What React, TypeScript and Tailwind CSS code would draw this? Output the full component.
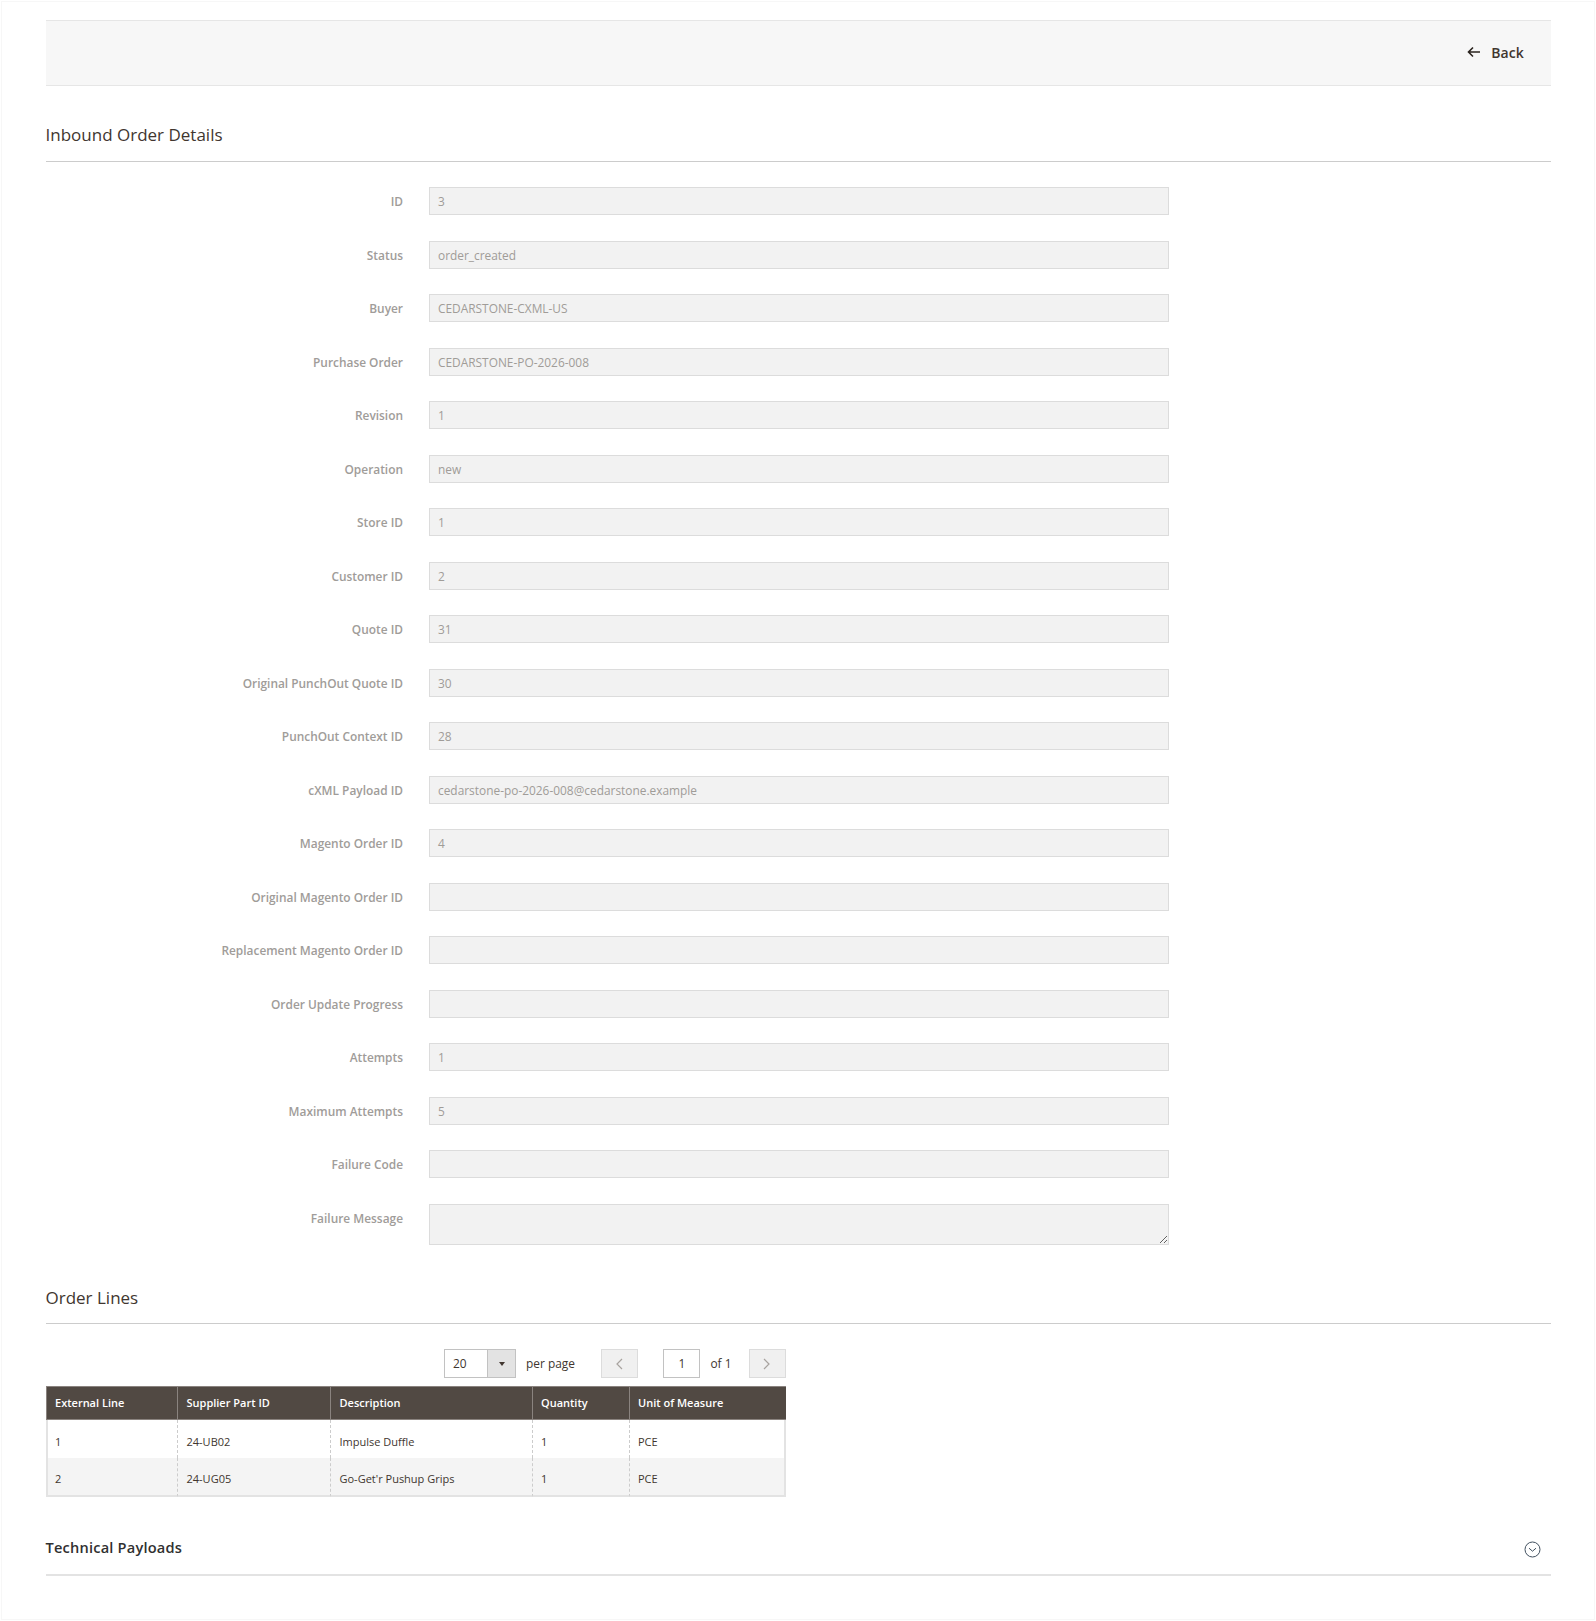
import React from "react";

const fields: [string, string][] = [
  ["ID", "3"],
  ["Status", "order_created"],
  ["Buyer", "CEDARSTONE-CXML-US"],
  ["Purchase Order", "CEDARSTONE-PO-2026-008"],
  ["Revision", "1"],
  ["Operation", "new"],
  ["Store ID", "1"],
  ["Customer ID", "2"],
  ["Quote ID", "31"],
  ["Original PunchOut Quote ID", "30"],
  ["PunchOut Context ID", "28"],
  ["cXML Payload ID", "cedarstone-po-2026-008@cedarstone.example"],
  ["Magento Order ID", "4"],
  ["Original Magento Order ID", ""],
  ["Replacement Magento Order ID", ""],
  ["Order Update Progress", ""],
  ["Attempts", "1"],
  ["Maximum Attempts", "5"],
  ["Failure Code", ""],
];

const headers = [
  ["External Line", "w-[131.5px]"],
  ["Supplier Part ID", "w-[153px]"],
  ["Description", "w-[201.5px]"],
  ["Quantity", "w-[97px]"],
  ["Unit of Measure", ""],
];

const rows = [
  ["1", "24-UB02", "Impulse Duffle", "1", "PCE"],
  ["2", "24-UG05", "Go-Get'r Pushup Grips", "1", "PCE"],
];

function Field({ label, value }: { label: string; value: string }) {
  return (
    <div className="flex h-[53.5px] items-start">
      <label className="w-[357.5px] h-[28px] leading-[28px] text-right text-[11.9px] font-semibold text-[#a09c99]">
        {label}
      </label>
      <div className="ml-[26px] h-[28px] w-[740px] border border-[#dcdcdc] bg-[#f2f2f2] px-[8px] text-[11.9px] leading-[26px] text-[#a09c98]">
        {value}
      </div>
    </div>
  );
}

export default function App() {
  return (
    <div
      className="h-[1621px] w-[1596px] bg-white p-[1px] text-[#41362f]"
      style={{ fontFamily: '"Open Sans", "Noto Sans", sans-serif' }}
    >
      <div className="h-[1619px] w-[1594px] border border-[#f7f7f7] pl-[43.5px] pr-[44px] pt-[18px]">
        <div className="flex h-[66px] w-[1505.5px] items-center justify-end border-y border-[#e6e6e6] bg-[#f7f7f7] pb-[2px] pr-[27px]">
          <svg width="14" height="12" viewBox="0 0 14 12" fill="none" stroke="#2b241f" strokeWidth="1.6" className="mr-[10px]">
            <path d="M13 6H1.5M6 1.5 1.5 6 6 10.5" />
          </svg>
          <span className="text-[14px] font-semibold tracking-[0.1px] text-[#41362f]">Back</span>
        </div>

        <div className="mt-[36px] h-[40px] w-[1505.5px] border-b border-[#cccccc] text-[17px] leading-[26px]">
          Inbound Order Details
        </div>

        <div className="mt-[25px] w-[1505.5px]">
          {fields.map(([l, v]) => (
            <Field key={l} label={l} value={v} />
          ))}
          <div className="flex items-start">
            <label className="w-[357.5px] h-[28px] leading-[28px] text-right text-[11.9px] font-semibold text-[#a09c99]">
              Failure Message
            </label>
            <textarea
              disabled
              className="ml-[26px] block h-[41px] w-[740px] border border-[#dcdcdc] bg-[#f2f2f2] resize-y"
            />
          </div>
        </div>

        <div className="mt-[39px] h-[40px] w-[1505.5px] border-b border-[#cccccc] text-[17px] leading-[28px]">
          Order Lines
        </div>

        <div className="mt-[25px] flex h-[30px] w-[740px] items-center text-[11.9px] leading-[29px]">
          <div className="ml-[398.5px] flex h-[29px] w-[72px] border border-[#c2c2c2] bg-white">
            <span className="flex-1 pl-[8px] leading-[27px]">20</span>
            <span className="flex w-[28px] items-center justify-center border-l border-[#c2c2c2] bg-[#e3e3e3]">
              <span className="h-0 w-0 border-x-[3.5px] border-t-[4px] border-x-transparent border-t-[#41362f]" />
            </span>
          </div>
          <span className="ml-[10px]">per page</span>
          <span className="ml-[26px] flex h-[29px] w-[37px] items-center justify-center border border-[#dcdcdc] bg-[#f0f0f0]">
            <svg width="8" height="12" viewBox="0 0 8 12" fill="none" stroke="#a8a39f" strokeWidth="1.2">
              <path d="M7 1 2 6l5 5" />
            </svg>
          </span>
          <span className="ml-[25.5px] flex h-[29px] w-[37px] items-center justify-center border border-[#c2c2c2] bg-white">1</span>
          <span className="ml-[10px]">of 1</span>
          <span className="ml-auto flex h-[29px] w-[37px] items-center justify-center border border-[#dcdcdc] bg-[#f0f0f0]">
            <svg width="8" height="12" viewBox="0 0 8 12" fill="none" stroke="#a8a39f" strokeWidth="1.2">
              <path d="m1 1 5 5-5 5" />
            </svg>
          </span>
        </div>

        <table className="mt-[7px] w-[740px] table-fixed border-separate border-spacing-0 text-[11px]">
          <thead>
            <tr className="h-[34px] bg-[#514943] text-white">
              {headers.map(([h, w]) => (
                <th
                  key={h}
                  className={`${w} border-y border-y-[#8a837f] border-l border-l-[#8a837f] pl-[8.5px] pr-[8px] pt-[1px] text-left font-semibold`}
                >
                  {h}
                </th>
              ))}
            </tr>
          </thead>
          <tbody>
            {rows.map((r, ri) => (
              <tr key={ri} className={ri === 1 ? "h-[39px] bg-[#f4f4f4]" : "h-[38px] bg-white"}>
                {r.map((c, i) => (
                  <td
                    key={i}
                    className={`${i === 0 ? "pl-[7.5px]" : "pl-[8.5px]"} pr-[8px] ${ri === 1 ? "pt-[7px] border-b-2 border-b-[#e3e3e3]" : "pt-[7px]"} ${
                      i === 0
                        ? "border-l-2 border-l-[#e3e3e3]"
                        : "border-l border-l-[#cccccc] [border-left-style:dashed]"
                    } ${i === 4 ? "border-r-2 border-r-[#e3e3e3]" : ""}`}
                  >
                    {c}
                  </td>
                ))}
              </tr>
            ))}
          </tbody>
        </table>

        <div className="mt-[35px] flex h-[44px] w-[1505.5px] items-start justify-between border-b-2 border-[#e3e3e3]">
          <span className="text-[14.6px] font-semibold leading-[31px] tracking-[0.2px] text-[#303030]">Technical Payloads</span>
          <svg width="17" height="17" viewBox="0 0 17 17" fill="none" stroke="#41505f" className="mt-[9px] mr-[10px]">
            <circle cx="8.5" cy="8.5" r="7.5" />
            <path d="m5 7.2 3.5 3 3.5-3" />
          </svg>
        </div>
      </div>
    </div>
  );
}
